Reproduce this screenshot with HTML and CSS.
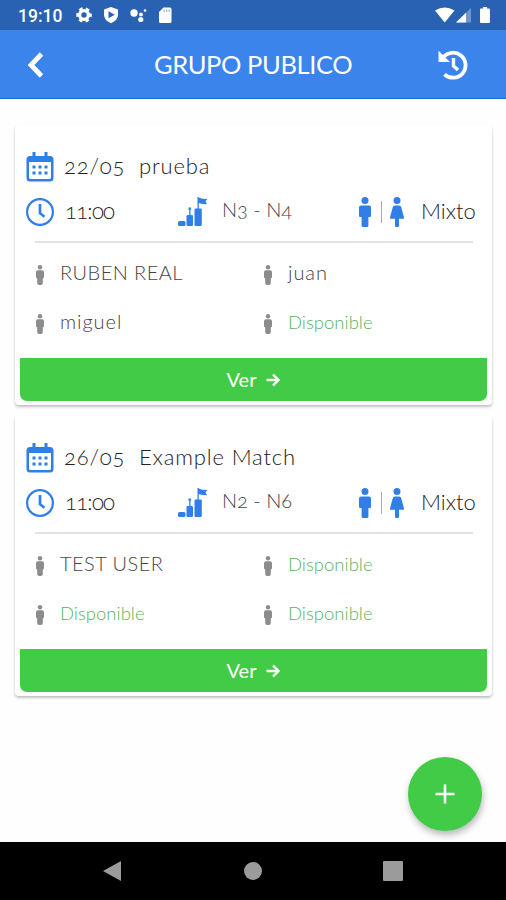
FILE: index.html
```html
<!DOCTYPE html>
<html lang="es">
<head>
<meta charset="utf-8">
<title>Grupo publico</title>
<link rel="stylesheet" href="styles.css">
</head>
<body>
<svg class="defs" aria-hidden="true">
  <symbol id="calendar" viewBox="0 0 28 30">
    <path fill-rule="evenodd" d="M4 4h20a3.500 3.500 0 0 1 3.500 3.500v18.500a3.500 3.500 0 0 1-3.500 3.500h-20a3.500 3.500 0 0 1-3.500-3.500v-18.500a3.500 3.500 0 0 1 3.500-3.500zM3 10v15.500q0 1.500 1.500 1.500h19q1.500 0 1.500-1.500V10z"/>
    <path d="M6.500 0h3v5h-3zM18.500 0h3v5h-3zM6.500 13.500h3v3h-3zM12.500 13.500h3v3h-3zM18.500 13.500h3v3h-3zM6.500 19.500h3v3h-3zM12.500 19.500h3v3h-3zM18.500 19.500h3v3h-3z"/>
  </symbol>
  <symbol id="clock" viewBox="0 0 28 30">
    <g fill="none" stroke="currentColor"><circle cx="14" cy="15" r="12.900" stroke-width="2.200"/><path d="M14 7v9.200l4.500 3.600" stroke-width="2.700"/></g>
  </symbol>
  <symbol id="podium" viewBox="0 0 30 30">
    <rect x="0" y="24" width="7.500" height="5" rx="1.500"/><rect x="8.500" y="18" width="6.500" height="11" rx="1.200"/><rect x="16.500" y="11.500" width="7.300" height="17.500" rx="1.200"/>
    <path d="M11.200 11h1.300v8h-1.300zM10.500 10.500h2.600v2.200h-2.600zM19.500 0h1.300v12h-1.300zM20.500.5l4 1.200 5 .2-2 2.300 1.500 3-4.500-.2-4-1z"/>
  </symbol>
  <symbol id="man" viewBox="0 0 12 30">
    <circle cx="6" cy="3.500" r="3.500"/><path d="M2 8.500h8a2 2 0 0 1 2 2V19q0 1-1 1H9.400v8.500q0 1.500-1.500 1.500H4.100q-1.500 0-1.500-1.500V20H1q-1 0-1-1v-8.500a2 2 0 0 1 2-2z"/>
  </symbol>
  <symbol id="woman" viewBox="0 0 14 30">
    <circle cx="7" cy="3.500" r="3.500"/><path d="M4.800 8.500h4.400q1.600 0 2 1.500L14 20.500q.2 1.300-1 1.300H9v6.700q0 1.500-1.500 1.500h-1Q5 30 5 28.500v-6.700H1q-1.200 0-1-1.300L2.800 10q.4-1.500 2-1.500z"/>
  </symbol>
  <symbol id="person" viewBox="0 0 10 20">
    <circle cx="5" cy="2.200" r="2.200"/><path d="M3 5.200h4a2 2 0 0 1 2 2V12q0 1.200-1.200 1.400V18q0 2-2 2H4.200q-2 0-2-2v-4.600Q1 13.200 1 12V7.200a2 2 0 0 1 2-2z"/>
  </symbol>
  <symbol id="arrow" viewBox="0 0 14 14">
    <path d="M.5 7h12M7 1.500 12.500 7 7 12.500" fill="none" stroke="currentColor" stroke-width="2.400"/>
  </symbol>
</svg>
<div class="statusbar">
  <span class="time">19:10</span>
  <svg class="st-left" viewBox="0 0 98 18" width="98" height="18">
    <circle cx="8" cy="9" r="4.400" fill="none" stroke="#fff" stroke-width="3.400"/>
    <circle cx="8" cy="9" r="6.600" fill="none" stroke="#fff" stroke-width="2.400" stroke-dasharray="3.700 3.210" stroke-dashoffset="1.850"/>
    <path fill="#fff" fill-rule="evenodd" d="M35 1l7 2.600v5.400q0 5-7 8.300-7-3.300-7-8.300V3.600zM32.500 5.200v7L38.800 8.700z"/>
    <circle cx="58" cy="7" r="3.700" fill="#fff"/><circle cx="65" cy="8.500" r="1.900" fill="#fff"/><circle cx="64.800" cy="13.500" r="2.600" fill="#fff"/><circle cx="69" cy="4.500" r="1.300" fill="#fff"/>
    <path fill="#fff" d="M87.500 1.500H94q1.500 0 1.500 1.500v12.500q0 1.500-1.500 1.500H84.500q-1.500 0-1.500-1.500V6z"/>
    <path fill="#9db8de" d="M87.500 3.500h1.300v2.500h-1.300zM90 3.500h1.300v2.500H90zM92.500 3.500h1.300v2.500h-1.300z"/>
  </svg>
  <svg class="st-right" viewBox="0 0 58 18" width="58" height="18">
    <path fill="#fff" d="M0 4.500Q9.700-1.500 19.500 4.500L9.700 16.500z"/>
    <path fill="#6f96ce" d="M36 2v14.500H21z"/><path fill="#fff" d="M31 6.800v9.700H21z"/>
    <path fill="#fff" d="M48 1h4v1.600h2q1 0 1 1V16q0 1-1 1h-8q-1 0-1-1V3.600q0-1 1-1h2z"/>
  </svg>
</div>
<header class="header">
  <svg class="back" viewBox="0 0 18 26" width="18" height="26"><path d="M15.500 2 5 13l10.500 11" fill="none" stroke="#fff" stroke-width="4.800"/></svg>
  <h1 class="title">GRUPO PUBLICO</h1>
  <svg class="history" viewBox="0 0 30 30" width="30" height="30">
    <path d="M5 7.800A12.500 12.500 0 1 1 6.500 24.300" fill="none" stroke="#fff" stroke-width="3.800"/>
    <path fill="#fff" d="M.5.800 12 12H.5z"/><path d="M15.500 8v8l4.500 4" fill="none" stroke="#fff" stroke-width="3.400"/>
  </svg>
</header>
<main class="content">
  <article class="card">
    <div class="date-row"><svg class="icon"><use href="#calendar"/></svg><span class="date">22/05&nbsp; prueba</span></div>
    <div class="info-row">
      <svg class="icon"><use href="#clock"/></svg><span class="hour">11:00</span>
      <svg class="podium"><use href="#podium"/></svg><span class="level">N3 - N4</span>
      <span class="gender"><svg class="man"><use href="#man"/></svg><i class="bar"></i><svg class="woman"><use href="#woman"/></svg></span><span class="mixed">Mixto</span>
    </div>
    <div class="rule"></div>
    <div class="players">
      <div class="player"><svg class="person"><use href="#person"/></svg><span class="name upper">RUBEN REAL</span></div>
      <div class="player"><svg class="person"><use href="#person"/></svg><span class="name">juan</span></div>
      <div class="player"><svg class="person"><use href="#person"/></svg><span class="name">miguel</span></div>
      <div class="player"><svg class="person"><use href="#person"/></svg><span class="free">Disponible</span></div>
    </div>
    <div class="button"><span>Ver</span><svg class="arrow"><use href="#arrow"/></svg></div>
  </article>
  <article class="card">
    <div class="date-row"><svg class="icon"><use href="#calendar"/></svg><span class="date">26/05&nbsp; Example Match</span></div>
    <div class="info-row">
      <svg class="icon"><use href="#clock"/></svg><span class="hour">11:00</span>
      <svg class="podium"><use href="#podium"/></svg><span class="level">N2 - N6</span>
      <span class="gender"><svg class="man"><use href="#man"/></svg><i class="bar"></i><svg class="woman"><use href="#woman"/></svg></span><span class="mixed">Mixto</span>
    </div>
    <div class="rule"></div>
    <div class="players">
      <div class="player"><svg class="person"><use href="#person"/></svg><span class="name upper">TEST USER</span></div>
      <div class="player"><svg class="person"><use href="#person"/></svg><span class="free">Disponible</span></div>
      <div class="player"><svg class="person"><use href="#person"/></svg><span class="free">Disponible</span></div>
      <div class="player"><svg class="person"><use href="#person"/></svg><span class="free">Disponible</span></div>
    </div>
    <div class="button"><span>Ver</span><svg class="arrow"><use href="#arrow"/></svg></div>
  </article>
</main>
<div class="fab"><svg viewBox="0 0 20 20" width="20" height="20"><path d="M10 .5v19M.5 10h19" stroke="#fff" stroke-width="2.600"/></svg></div>
<nav class="navbar">
  <svg viewBox="0 0 19 22" width="19" height="22"><path fill="#9b9b9b" d="M18 1v20L0 11z"/></svg>
  <svg viewBox="0 0 18 18" width="18" height="18"><circle cx="9" cy="9" r="9" fill="#9b9b9b"/></svg>
  <svg viewBox="0 0 20 20" width="20" height="20"><rect width="20" height="20" rx="1" fill="#9b9b9b"/></svg>
</nav>
</body>
</html>
```
FILE: styles.css
```css
* { box-sizing: border-box; }
body {
  margin: 0;
  width: 506px;
  height: 900px;
  overflow: hidden;
  position: relative;
  display: flex;
  flex-direction: column;
  background: #fefefe;
  font-family: Lato, "Open Sans", sans-serif;
  font-weight: 300;
  font-feature-settings: "onum" 1;
  color: #222;
}
svg { display: block; flex: none; fill: currentColor; }
.defs { position: absolute; width: 0; height: 0; }
.statusbar {
  height: 30px;
  flex: none;
  display: flex;
  align-items: center;
  padding: 0 13px 0 18px;
  background: #2962b3;
}
.time {
  width: 58px;
  color: #fff;
  font: 500 17.5px Roboto, sans-serif;
  white-space: nowrap;
  padding-top: 2px;
}
.st-right { margin-left: auto; }
.header {
  height: 69px;
  flex: none;
  display: flex;
  align-items: center;
  padding: 2px 38px 0 26px;
  background: #3a84eb;
  border-bottom: 1px solid #1c6fd4;
}
.title {
  flex: 1;
  margin: 0;
  padding: 0 0 2px 110px;
  color: #fff;
  font-size: 25.5px;
  font-weight: 400;
  letter-spacing: -0.4px;
  white-space: nowrap;
}
.content {
  flex: 1;
  display: flex;
  flex-direction: column;
  gap: 11px;
  padding: 26px 14px 0 15px;
}
.card {
  height: 280px;
  flex: none;
  display: flex;
  flex-direction: column;
  padding: 19px 5px 4px;
  background: #fff;
  border-radius: 4px;
  box-shadow: 0 2px 3px rgba(0, 0, 0, 0.22), 0 1px 2px rgba(0, 0, 0, 0.06);
}
.date-row, .info-row { height: 45px; align-items: center; padding-left: 6px; white-space: nowrap; }
.date-row { display: flex; gap: 10px; }
.info-row { display: grid; grid-template-columns: 39px 113px 44px 137px 62px auto; }
.icon { width: 28px; height: 30px; color: #307fe8; }
.date, .hour, .mixed { font-size: 22px; padding-bottom: 2px; }
.date { letter-spacing: 0.85px; padding-bottom: 3px; }
.hour { letter-spacing: -0.7px; }
.podium { width: 30px; height: 30px; color: #307fe8; }
.level { font-size: 20px; color: #444; padding-bottom: 5px; }
.gender { display: flex; align-items: center; color: #307fe8; }
.man { width: 12px; height: 30px; }
.bar { width: 1px; height: 22px; margin: 0 8px 0 10px; background: #aaa; }
.woman { width: 14px; height: 30px; }
.rule { height: 2px; margin: 7px 14px 0 15px; background: #e3e3e3; }
.players {
  display: grid;
  grid-template-columns: 228px auto;
  grid-auto-rows: 49px;
  margin: 6px 0 0 15px;
}
.player { display: flex; align-items: center; gap: 15px; font-size: 20px; color: #444; white-space: nowrap; }
.person { width: 10px; height: 20px; margin-top: 3px; color: #8c8c8c; }
.name { letter-spacing: 0.95px; padding-bottom: 3px; }
.upper { letter-spacing: 0.45px; }
.free { font-size: 18.5px; color: #58b35d; padding-bottom: 1px; }
.button {
  height: 43px;
  margin-top: auto;
  display: flex;
  align-items: center;
  justify-content: center;
  gap: 10px;
  color: #fff;
  font-size: 20px;
  font-weight: 400;
  background: #41cb46;
  border-radius: 0 0 7px 7px;
}
.button span { padding-bottom: 2px; }
.arrow { width: 14px; height: 14px; }
.fab {
  position: absolute;
  left: 408px;
  top: 757px;
  width: 74px;
  height: 74px;
  border-radius: 50%;
  display: flex;
  align-items: center;
  justify-content: center;
  background: #41cb46;
  box-shadow: 1px 4px 7px rgba(0, 0, 0, 0.28);
}
.navbar {
  height: 58px;
  flex: none;
  display: flex;
  align-items: center;
  justify-content: space-between;
  padding: 0 103px;
  background: #000;
}
```
